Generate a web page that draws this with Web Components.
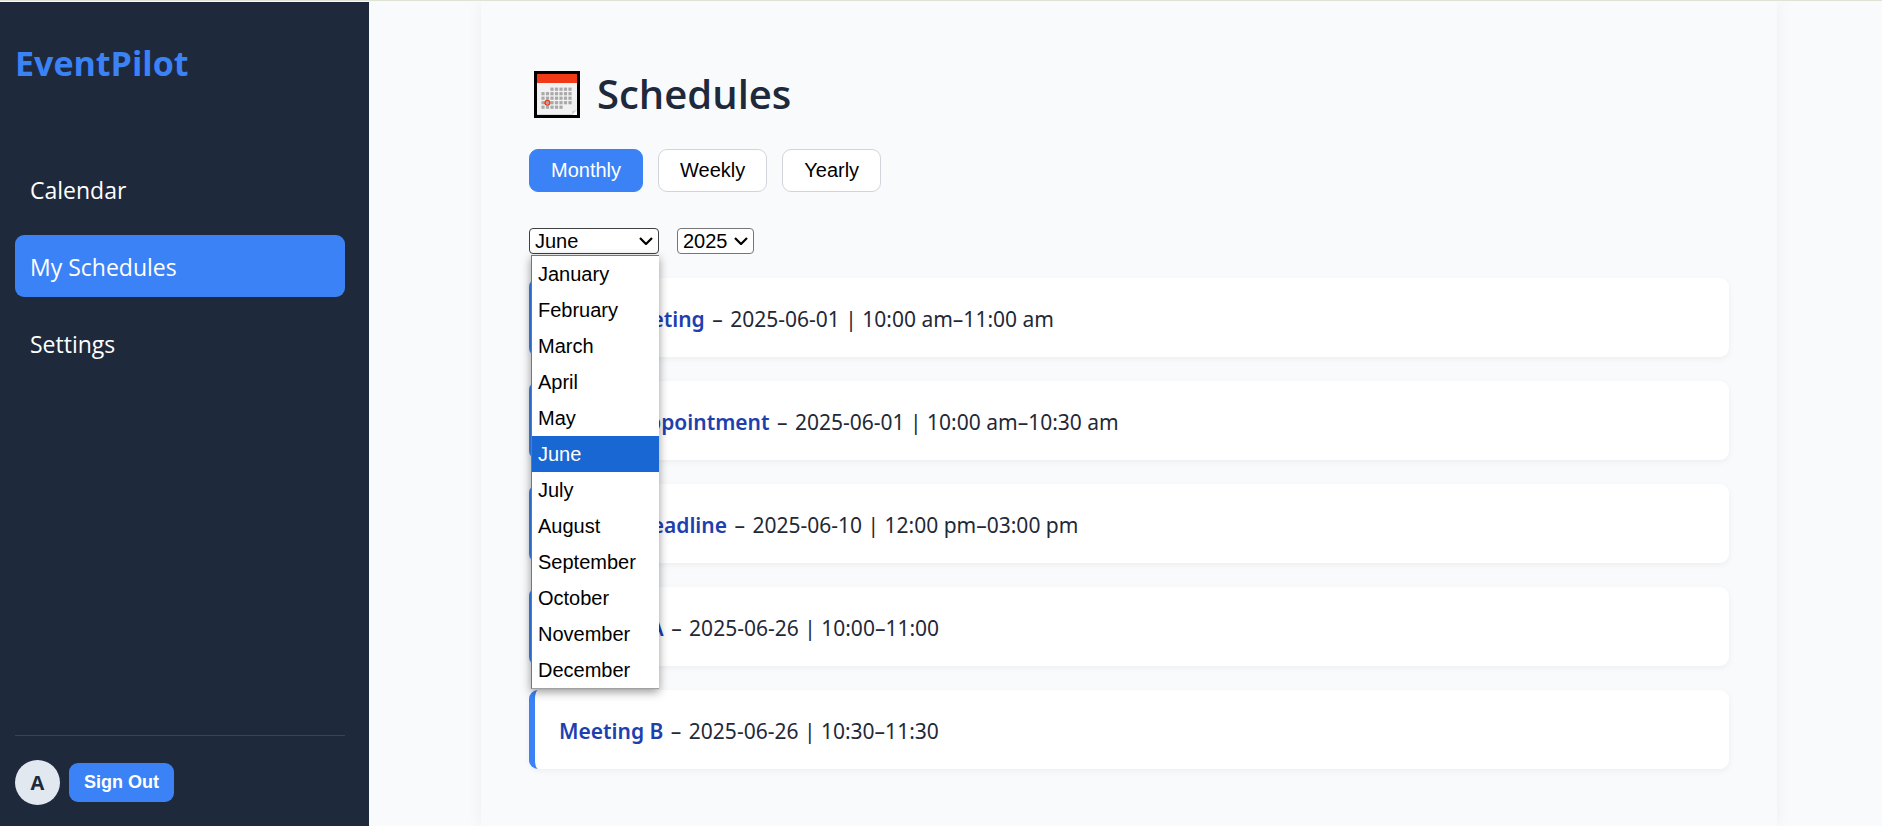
<!DOCTYPE html>
<html lang="en">
<head>
<meta charset="utf-8">
<title>EventPilot – My Schedules</title>
<style>
  html, body { margin: 0; }
  body {
    font-family: "Open Sans", "Noto Sans", sans-serif;
    font-size: 21px;
    line-height: 31px;
    color: #1f2937;
    background: #f9fafc;
  }
</style>
</head>
<body>
<ep-app>
  <ep-sidebar slot="sidebar" brand="EventPilot">
    <ep-nav-item href="#calendar">Calendar</ep-nav-item>
    <ep-nav-item href="#schedules" active>My Schedules</ep-nav-item>
    <ep-nav-item href="#settings">Settings</ep-nav-item>
    <ep-account slot="footer" initial="A"></ep-account>
  </ep-sidebar>
  <ep-page heading="Schedules">
    <ep-tabs options="Monthly,Weekly,Yearly" selected="Monthly"></ep-tabs>
    <ep-filters>
      <ep-select label="Month" wide open value="June" options="January,February,March,April,May,June,July,August,September,October,November,December"></ep-select>
      <ep-select label="Year" value="2025" options="2025"></ep-select>
    </ep-filters>
    <ep-schedule-list>
      <ep-event name="Team Meeting">2025-06-01 | 10:00 am–11:00 am</ep-event>
      <ep-event name="Doctor Appointment">2025-06-01 | 10:00 am–10:30 am</ep-event>
      <ep-event name="Project Deadline">2025-06-10 | 12:00 pm–03:00 pm</ep-event>
      <ep-event name="Meeting A">2025-06-26 | 10:00–11:00</ep-event>
      <ep-event name="Meeting B">2025-06-26 | 10:30–11:30</ep-event>
    </ep-schedule-list>
  </ep-page>
</ep-app>

<script>
  const define = (name, render, after) => customElements.define(name, class extends HTMLElement {
    constructor() {
      super();
      this.attachShadow({ mode: "open" });
    }
    connectedCallback() {
      this.shadowRoot.innerHTML = render(this);
      if (after) after(this);
    }
  });

  define("ep-app", () => `
    <style>
      :host { display: flex; box-sizing: border-box; min-height: 100vh; border-top: 1px solid #dfe3d5; padding-top: 1px; }
      ::slotted(ep-sidebar) { flex: none; }
      main { flex: 1; min-width: 0; display: flex; padding: 0 105px 0 112px; }
      ::slotted(ep-page) { flex: 1; min-width: 0; }
    </style>
    <slot name="sidebar"></slot>
    <main><slot></slot></main>
  `);

  define("ep-sidebar", el => `
    <style>
      :host { display: flex; flex-direction: column; box-sizing: border-box; width: 369px; padding: 34px 24px 21px 15px; background: #1e293b; color: #fff; }
      h2 { margin: 0 0 68px; font-size: 34px; line-height: 54px; font-weight: 700; color: #3b82f6; }
      nav { display: flex; flex-direction: column; gap: 15px; flex: 1; }
      footer { border-top: 1px solid #374357; padding-top: 24px; }
    </style>
    <h2>${el.getAttribute("brand")}</h2>
    <nav aria-label="Main"><slot></slot></nav>
    <footer><slot name="footer"></slot></footer>
  `);

  define("ep-nav-item", el => `
    <style>
      :host { display: block; }
      a { display: block; padding: 16px 15px 14px; border-radius: 9px; font-size: 23px; line-height: 32px; color: #fff; text-decoration: none; }
      :host([active]) a { background: #3b82f6; }
    </style>
    <a href="${el.getAttribute("href")}" ${el.hasAttribute("active") ? 'aria-current="page"' : ""}><slot></slot></a>
  `);

  define("ep-account", el => `
    <style>
      :host { display: flex; align-items: center; gap: 9px; }
      span { display: grid; place-items: center; width: 45px; height: 45px; border-radius: 50%; background: #e2e8f0; color: #1e293b; font-size: 20px; font-weight: 700; }
      button { height: 39px; padding: 0 15px; border: 0; border-radius: 9px; background: #3b82f6; color: #fff; font: 700 18px "Liberation Sans", Arial, sans-serif; cursor: pointer; }
    </style>
    <span>${el.getAttribute("initial")}</span>
    <button type="button">Sign Out</button>
  `);

  const dots = [[2, 6], [0, 6], [0, 6], [0, 6], [0, 4]].map(([from, to], row) => {
    let s = "";
    for (let c = from; c <= to; c++) s += `<rect x="${7.4 + c * 4.5}" y="${16.6 + row * 4.5}" width="3.2" height="3.2"/>`;
    return s;
  }).join("");

  define("ep-page", el => `
    <style>
      :host { display: block; box-sizing: border-box; padding: 60px 48px 57px; background: #f9fafc; box-shadow: 0 0 15px rgba(0, 0, 0, .05); clip-path: inset(0 -20px); }
      h1 { display: flex; align-items: flex-end; gap: 17px; margin: 0 0 24px; padding-left: 5px; font-size: 40px; line-height: 63px; font-weight: 600; color: #1e293b; }
      svg { display: block; width: 46px; height: 47px; margin-bottom: 7px; }
    </style>
    <h1>
      <svg viewBox="0 0 46 47" aria-hidden="true">
        <rect width="46" height="47" fill="#000"/>
        <rect x="3" y="3" width="40" height="41" fill="#f2f2f2"/>
        <rect x="3" y="3" width="40" height="9" fill="#f03a17"/>
        <path d="M3 43h35v1H3z" fill="#d8d8d8"/>
        <g fill="#a9a9a9">${dots}</g>
        <path d="M38 44l5-5v5z" fill="#fff"/>
        <path d="M38 44v-4l5-1z" fill="#d3d3d3"/>
        <circle cx="13.400" cy="31.700" r="2.400" fill="none" stroke="#f03a17" stroke-width="1.300"/>
        <path d="M10 32h2" stroke="#f03a17" stroke-width="1.200"/>
      </svg>
      <span>${el.getAttribute("heading")}</span>
    </h1>
    <slot></slot>
  `);

  define("ep-tabs", el => `
    <style>
      :host { display: flex; gap: 15px; }
      button { height: 43px; padding: 0 21px; border: 1px solid #d1d5db; border-radius: 9px; background: #fff; color: #000; font: 20px "Liberation Sans", Arial, sans-serif; cursor: pointer; }
      button[aria-pressed="true"] { background: #3b82f6; border-color: #3b82f6; color: #fff; }
    </style>
    ${el.getAttribute("options").split(",").map(o =>
      `<button type="button" aria-pressed="${o === el.getAttribute("selected")}">${o}</button>`).join("")}
  `, el => {
    const buttons = [...el.shadowRoot.querySelectorAll("button")];
    buttons.forEach(b => b.addEventListener("click", () =>
      buttons.forEach(o => o.setAttribute("aria-pressed", o === b))));
  });

  define("ep-filters", () => `
    <style>:host { display: flex; gap: 18px; margin: 36px 0 24px; }</style>
    <slot></slot>
  `);

  define("ep-select", el => {
    const value = el.getAttribute("value");
    const options = el.getAttribute("options").split(",");
    return `
    <style>
      :host { display: block; position: relative; width: 77px; font: 20px "Liberation Sans", Arial, sans-serif; color: #000; }
      :host([wide]) { width: 130px; }
      .field { display: grid; align-items: center; }
      .field > * { grid-area: 1 / 1; }
      select { appearance: none; box-sizing: border-box; width: 100%; height: 26px; margin: 0; padding: 0 5px; border: 1px solid #767676; border-radius: 4px; background: #fff; color: inherit; font: inherit; }
      :host([open]) select { border-color: #404040; }
      svg { justify-self: end; margin-right: 6px; width: 14px; height: 8px; pointer-events: none; }
      ul { position: absolute; z-index: 1; top: 27px; left: 2px; right: 0; margin: 0; padding: 0; list-style: none; background: #fff; border: solid #767676; border-width: 1px 0 0 1px; border-bottom: 1px solid #a0a0a0; box-shadow: 0 3px 9px rgba(0, 0, 0, .4); }
      li { padding-left: 6px; line-height: 36px; }
      li[aria-selected="true"] { background: #1967d2; color: #fff; }
    </style>
    <div class="field">
      <select aria-label="${el.getAttribute("label")}">
        ${options.map(o => `<option ${o === value ? "selected" : ""}>${o}</option>`).join("")}
      </select>
      <svg viewBox="0 0 14 8" aria-hidden="true"><path d="M1 1l6 6 6-6" fill="none" stroke="#000" stroke-width="2.200"/></svg>
    </div>
    ${el.hasAttribute("open") ? `<ul role="listbox" aria-label="${el.getAttribute("label")}">${options.map(o =>
      `<li role="option" aria-selected="${o === value}">${o}</li>`).join("")}</ul>` : ""}
  `; }, el => {
    const select = el.shadowRoot.querySelector("select");
    el.shadowRoot.querySelectorAll("li").forEach(li => li.addEventListener("click", () => {
      select.value = li.textContent;
      li.parentElement.remove();
      el.removeAttribute("open");
    }));
  });

  define("ep-schedule-list", () => `
    <style>:host { display: flex; flex-direction: column; gap: 24px; font-family: "Noto Sans", "Open Sans", sans-serif; }</style>
    <slot></slot>
  `);

  define("ep-event", el => `
    <style>
      :host { display: block; padding: 26px 24px 22px; border-left: 6px solid #3b82f6; border-radius: 9px; background: #fff; box-shadow: 0 2px 6px rgba(0, 0, 0, .05); }
      strong { font-weight: 600; color: #1e40af; }
      .dash { margin: 0 2px; }
    </style>
    <strong>${el.getAttribute("name")}</strong> <span class="dash">–</span> <slot></slot>
  `);
</script>
</body>
</html>
